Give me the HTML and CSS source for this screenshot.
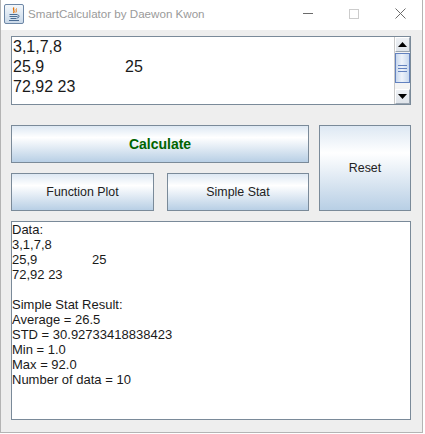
FILE: index.html
```html
<!DOCTYPE html>
<html>
<head>
<meta charset="utf-8">
<link rel="stylesheet" href="styles.css">
</head>
<body>
<div class="window">
  <div class="titlebar">
    <div class="app-icon">
      <svg width="20" height="20" viewBox="0 0 20 20">
        <defs>
          <linearGradient id="ig" x1="0" y1="0" x2="0" y2="1">
            <stop offset="0" stop-color="#f4f8fc"/>
            <stop offset="1" stop-color="#c9d8e8"/>
          </linearGradient>
        </defs>
        <rect x="0.5" y="0.5" width="19" height="19" rx="1.5" fill="url(#ig)" stroke="#6d87a6"/>
        <path d="M10 3.5 C8 5.5 11.5 6.5 9.5 9" fill="none" stroke="#e76f00" stroke-width="1.3"/>
        <path d="M12.5 4.5 C11.5 6 13 6.8 11.8 8.5" fill="none" stroke="#e76f00" stroke-width="1"/>
        <path d="M5.5 10.5 h8 M5.5 12.5 h8 M6.5 14.5 h6 M5 16.5 h10" stroke="#4b6c93" stroke-width="1.1"/>
        <path d="M13.5 11 q2.2 0 1.5 2 q-0.6 1 -2 1" fill="none" stroke="#4b6c93" stroke-width="0.9"/>
      </svg>
    </div>
    <div class="title">SmartCalculator by Daewon Kwon</div>
    <div class="controls">
      <span class="ctl ctl-min"></span>
      <span class="ctl ctl-max"></span>
      <span class="ctl ctl-close">
        <svg width="11" height="11" viewBox="0 0 11 11"><path d="M0.5 0.5 L10.5 10.5 M10.5 0.5 L0.5 10.5" stroke="#6b6b6b" stroke-width="1"/></svg>
      </span>
    </div>
  </div>
  <div class="content">
    <div class="input-box">
      <div class="input-text">3,1,7,8
25,9	25
72,92 23</div>
      <div class="scrollbar">
        <div class="sb-btn">
          <svg width="9" height="5" viewBox="0 0 9 5"><path d="M4.5 0 L9 5 H0 Z" fill="#000"/></svg>
        </div>
        <div class="sb-track">
          <div class="sb-thumb">
            <span class="grip"></span><span class="grip"></span><span class="grip"></span>
          </div>
        </div>
        <div class="sb-btn">
          <svg width="9" height="5" viewBox="0 0 9 5"><path d="M0 0 H9 L4.5 5 Z" fill="#000"/></svg>
        </div>
      </div>
    </div>
    <div class="buttons">
      <button class="btn btn-calc">Calculate</button>
      <button class="btn btn-reset">Reset</button>
      <button class="btn btn-plot">Function Plot</button>
      <button class="btn btn-stat">Simple Stat</button>
    </div>
    <div class="output-box">Data:
3,1,7,8
25,9	25
72,92 23

Simple Stat Result:
Average = 26.5
STD = 30.92733418838423
Min = 1.0
Max = 92.0
Number of data = 10</div>
  </div>
</div>
</body>
</html>
```

FILE: styles.css
```css
html, body {
  margin: 0;
  padding: 0;
  background: #ffffff;
}

.window {
  width: 423px;
  height: 433px;
  box-sizing: border-box;
  border: 1px solid #b4b4b4;
  border-top: none;
  background: #eeeeee;
  display: flex;
  flex-direction: column;
}

.titlebar {
  height: 30px;
  background: #ffffff;
  display: flex;
  align-items: center;
  flex-shrink: 0;
}

.app-icon {
  width: 20px;
  height: 20px;
  margin-left: 3px;
  margin-top: -2px;
}

.app-icon svg {
  display: block;
}

.title {
  margin-left: 4px;
  font-family: "Liberation Sans", Arial, sans-serif;
  font-size: 11.6px;
  color: #9a9a9a;
  margin-top: -3px;
  flex: 1;
}

.controls {
  display: flex;
  align-items: center;
  height: 30px;
  margin-top: -3px;
}

.ctl {
  display: block;
  position: relative;
}

.ctl-min {
  width: 10px;
  height: 1px;
  background: #6b6b6b;
  margin-right: 36px;
}

.ctl-max {
  width: 8px;
  height: 8px;
  border: 1px solid #cccccc;
  margin-right: 36px;
}

.ctl-close {
  width: 11px;
  height: 11px;
  margin-right: 16px;
}

.ctl-close svg {
  display: block;
}

.content {
  padding: 6px 11px 0 10px;
  display: flex;
  flex-direction: column;
}

.input-box {
  width: 400px;
  height: 69px;
  box-sizing: border-box;
  border: 1px solid #7a8a99;
  background: #ffffff;
  display: flex;
}

.input-text {
  flex: 1;
  white-space: pre;
  tab-size: 112px;
  font-family: "Liberation Sans", Arial, sans-serif;
  font-size: 16px;
  line-height: 20px;
  color: #1a1a1a;
  padding-left: 1px;
  overflow: hidden;
}

.scrollbar {
  width: 15px;
  display: flex;
  flex-direction: column;
  border-left: 1px solid #c9c9c9;
  background: #eeeeee;
}

.sb-btn {
  height: 15px;
  box-sizing: border-box;
  border: 1px solid #ffffff;
  border-right-color: #9aa5b1;
  border-bottom-color: #9aa5b1;
  background: linear-gradient(to bottom, #eef1f5, #dfe4ea);
  display: flex;
  align-items: center;
  justify-content: center;
}

.sb-btn svg {
  display: block;
}

.sb-track {
  flex: 1;
  background: #f4f4f4;
  padding: 1px 0 5px 0;
  display: flex;
  flex-direction: column;
}

.sb-thumb {
  height: 30px;
  box-sizing: border-box;
  border: 1px solid #6382bf;
  background: linear-gradient(to right, #c8d8ee 0%, #eef3fa 45%, #c8d8ee 100%);
  display: flex;
  flex-direction: column;
  align-items: center;
  justify-content: center;
  gap: 2px;
}

.grip {
  display: block;
  width: 9px;
  height: 1px;
  background: #6382bf;
}

.buttons {
  margin-top: 20px;
  display: grid;
  grid-template-columns: 143px 13px 142px 10px 92px;
  grid-template-rows: 38px 10px 38px;
}

.btn {
  margin: 0;
  padding: 0;
  box-sizing: border-box;
  border: 1px solid #7a8a99;
  border-radius: 0;
  background: linear-gradient(to bottom, #dde8f3 0%, #ffffff 32%, #b8cfe5 100%);
  font-family: "Liberation Sans", Arial, sans-serif;
  font-size: 12.4px;
  color: #222222;
  display: flex;
  align-items: center;
  justify-content: center;
}

.btn-calc {
  grid-column: 1 / 4;
  grid-row: 1;
  font-weight: bold;
  font-size: 14px;
  color: #006400;
}

.btn-reset {
  grid-column: 5;
  grid-row: 1 / 4;
}

.btn-plot {
  grid-column: 1;
  grid-row: 3;
}

.btn-stat {
  grid-column: 3;
  grid-row: 3;
}

.output-box {
  margin-top: 10px;
  width: 400px;
  height: 199px;
  box-sizing: border-box;
  border: 1px solid #7a8a99;
  background: #ffffff;
  white-space: pre;
  tab-size: 80px;
  font-family: "Liberation Sans", Arial, sans-serif;
  font-size: 13px;
  line-height: 15px;
  color: #1a1a1a;
  padding: 0 0 0 0;
  overflow: hidden;
}
```
